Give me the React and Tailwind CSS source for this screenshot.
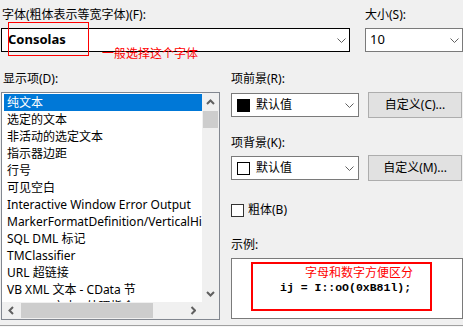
import React from 'react';

const Chevron = () => (
    <svg width="9" height="5" viewBox="0 0 9 5" className="shrink-0">
        <path d="M0.5 0.5 L4.5 4.5 L8.5 0.5" fill="none" stroke="#606060" strokeWidth="1" />
    </svg>
);

const Arrow = ({ dir }) => {
    const paths = {
        up: 'M1 5 L4.5 1.5 L8 5',
        down: 'M1 1 L4.5 4.5 L8 1',
        left: 'M5 1 L1.5 4.5 L5 8',
        right: 'M1.5 1 L5 4.5 L1.5 8',
    };
    const vertical = dir === 'up' || dir === 'down';
    return (
        <svg width={vertical ? 9 : 6} height={vertical ? 6 : 9} viewBox={vertical ? '0 0 9 6' : '0 0 6 9'}>
            <path d={paths[dir]} fill="none" stroke="#606060" strokeWidth="2" />
        </svg>
    );
};

const items = [
    '纯文本',
    '选定的文本',
    '非活动的选定文本',
    '指示器边距',
    '行号',
    '可见空白',
    'Interactive Window Error Output',
    'MarkerFormatDefinition/VerticalHighlight',
    'SQL DML 标记',
    'TMClassifier',
    'URL 超链接',
    'VB XML 文本 - CData 节',
    'VB XML 文本 - 处理指令',
];

const ColorCombo = ({ swatch }) => (
    <div className="w-[128px] h-[24px] bg-white border border-[#7a7a7a] flex items-center pl-[5px] pr-[4px]">
        <div className={`w-[13px] h-[13px] ${swatch === 'black' ? 'bg-black' : 'bg-white border border-black'}`} />
        <span className="ml-[6px] flex-1">默认值</span>
        <Chevron />
    </div>
);

const Button = ({ children }) => (
    <div className="ml-[9px] w-[94px] h-[26px] bg-[#e1e1e1] border border-[#adadad] flex items-center justify-center">
        {children}
    </div>
);

const App = () => {
    return (
        <div
            className="w-[463px] h-[327px] bg-[#f0f0f0] relative overflow-hidden text-[12px] text-black"
            style={{ fontFamily: '"Noto Sans", "Noto Sans CJK SC", sans-serif' }}
        >
            {/* top row */}
            <div className="flex pt-[7px]">
                <div className="ml-[1px] w-[349px]">
                    <div className="h-[16px] leading-[16px] pl-[1px]">字体(粗体表示等宽字体)(F):</div>
                    <div className="mt-[5px] h-[24px] bg-white border border-black flex items-center pl-[6px] pr-[3px]">
                        <span className="flex-1 font-bold text-[13px]">Consolas</span>
                        <Chevron />
                    </div>
                </div>
                <div className="ml-[15px] w-[98px]">
                    <div className="h-[16px] leading-[16px]">大小(S):</div>
                    <div className="mt-[5px] h-[24px] bg-white border border-[#7a7a7a] flex items-center pl-[4px] pr-[3px]">
                        <span className="flex-1 text-[13px]">10</span>
                        <Chevron />
                    </div>
                </div>
            </div>

            {/* middle */}
            <div className="flex mt-[19px]">
                <div className="ml-[1px] w-[219px]">
                    <div className="h-[16px] leading-[16px] pl-[2px]">显示项(D):</div>
                    <div className="mt-[5px] h-[228px] bg-white border border-[#828790] flex flex-col">
                        <div className="flex h-[209px]">
                            <div className="flex-1 overflow-hidden pt-[1px] pl-[2px]">
                                {items.map((item, idx) => (
                                    <div
                                        key={idx}
                                        className={`h-[17px] leading-[17px] pl-[3px] whitespace-nowrap ${idx === 0 ? 'bg-[#0078d7] text-white' : ''}`}
                                    >
                                        {item}
                                    </div>
                                ))}
                            </div>
                            <div className="w-[17px] bg-[#f0f0f0] flex flex-col">
                                <div className="h-[17px] flex items-center justify-center">
                                    <Arrow dir="up" />
                                </div>
                                <div className="mt-[1px] mx-[1px] h-[17px] bg-[#cdcdcd]" />
                                <div className="flex-1" />
                                <div className="h-[17px] flex items-center justify-center">
                                    <Arrow dir="down" />
                                </div>
                            </div>
                        </div>
                        <div className="flex h-[17px] bg-[#f0f0f0]">
                            <div className="w-[17px] flex items-center justify-center">
                                <Arrow dir="left" />
                            </div>
                            <div className="ml-[2px] w-[132px] my-[1px] bg-[#cdcdcd]" />
                            <div className="flex-1 flex items-center justify-end pr-[6px]">
                                <Arrow dir="right" />
                            </div>
                            <div className="w-[17px]" />
                        </div>
                    </div>
                </div>

                <div className="ml-[11px] w-[232px]">
                    <div className="h-[16px] leading-[16px]">项前景(R):</div>
                    <div className="mt-[5px] flex items-center h-[26px]">
                        <ColorCombo swatch="black" />
                        <Button>自定义(C)...</Button>
                    </div>
                    <div className="mt-[17px] h-[16px] leading-[16px]">项背景(K):</div>
                    <div className="mt-[4px] flex items-center h-[26px]">
                        <ColorCombo swatch="white" />
                        <Button>自定义(M)...</Button>
                    </div>
                    <div className="mt-[21px] h-[16px] flex items-center">
                        <div className="w-[13px] h-[13px] bg-white border border-[#333333]" />
                        <span className="ml-[4px] leading-[16px]">粗体(B)</span>
                    </div>
                    <div className="mt-[19px] h-[16px] leading-[16px]">示例:</div>
                    <div className="mt-[5px] h-[61px] bg-white border border-[#7a7a7a] pt-[3px] pl-[19px]">
                        <div className="w-[181px] h-[49px] border-2 border-[#ff0000] flex flex-col">
                            <div className="h-[17px] leading-[17px] pl-[52px] text-[#ff0000]">字母和数字方便区分</div>
                            <div
                                className="h-[14px] leading-[14px] pl-[27px] text-[11.5px] font-bold whitespace-pre"
                                style={{ fontFamily: '"Liberation Mono", monospace' }}
                            >
                                ij = I::oO(0xB81l);
                            </div>
                        </div>
                    </div>
                </div>
            </div>

            {/* bottom edge */}
            <div className="mt-[5px] h-[2px] border-t border-[#a0a0a0] bg-[#f7f7f7]" />

            {/* annotations */}
            <div className="absolute left-[8px] top-[22px] w-[81px] h-[34px] border border-[#ff0000]" />
            <div className="absolute left-[102px] top-[46px] leading-[16px] text-[#ff0000]">一般选择这个字体</div>
        </div>
    );
};

export default App;
